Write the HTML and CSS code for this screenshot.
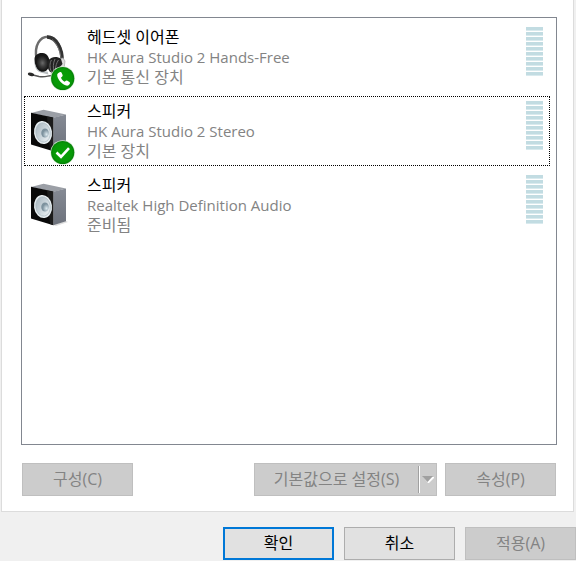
FILE: index.html
```html
<!DOCTYPE html>
<html lang="ko">
<head>
<meta charset="utf-8">
<title>소리</title>
<link rel="stylesheet" href="styles.css">
</head>
<body>
<svg class="defs" aria-hidden="true">
  <defs>
    <linearGradient id="side" x1="0" y1="0" x2="0" y2="1"><stop offset="0" stop-color="#858a94"/><stop offset="1" stop-color="#6d727c"/></linearGradient>
    <linearGradient id="cone" x1="0" y1="0" x2="1" y2="1"><stop offset="0" stop-color="#a4b2bb"/><stop offset=".5" stop-color="#c9d4da"/><stop offset="1" stop-color="#f2f6f8"/></linearGradient>
    <radialGradient id="cap" cx=".7" cy=".65"><stop offset="0" stop-color="#dce9ef"/><stop offset="1" stop-color="#7d929e"/></radialGradient>
    <radialGradient id="cup"><stop offset="0" stop-color="#6a6a6a"/><stop offset=".5" stop-color="#3c3c3c"/><stop offset="1" stop-color="#181818"/></radialGradient>
    <radialGradient id="green"><stop offset="0" stop-color="#08a008"/><stop offset=".8" stop-color="#079907"/><stop offset="1" stop-color="#067f08"/></radialGradient>
    <g id="speaker">
      <path d="M28 54l13-4 2 1-12 4z" fill="#dedede"/>
      <path d="M6 16l12.500-3.300L41 17.500l-12.700 3.500z" fill="#9b9fa6"/>
      <path d="M28.300 20.700L41 17.500V50.200L28.300 54.200z" fill="url(#side)"/>
      <path d="M6 15.800l22.300 4.800v33.600L6 47.400z" fill="#090909"/>
      <path d="M22 19.500l6 1.300v33.100l-3-.9z" fill="#1c1c1c"/>
      <ellipse cx="18" cy="35.500" rx="9" ry="11.600" transform="rotate(-8 18 35.500)" fill="#e6edf0"/>
      <ellipse cx="18" cy="35.500" rx="7.200" ry="9.700" transform="rotate(-8 18 35.500)" fill="url(#cone)" stroke="#a9b8c0" stroke-width=".7"/>
      <ellipse cx="20" cy="36" rx="3.800" ry="4.500" fill="url(#cap)"/>
    </g>
    <g id="badge"><circle cx="37.700" cy="55.500" r="12.200" fill="#d4ead4"/><circle cx="37.700" cy="55.500" r="11.600" fill="url(#green)"/></g>
  </defs>
</svg>
<main class="panel">
  <ul class="devices">
    <li class="device">
      <svg class="icon" viewBox="0 0 54 68" aria-hidden="true">
        <path d="M11.500 36C9 22 15 13.800 23 13.800c8.500 0 14 10 14 24" fill="none" stroke="#6c6c6c" stroke-width="2.400"/>
        <path d="M22 14c9 0 15.500 12 15 24" fill="none" stroke="#333" stroke-width="3.600"/>
        <path d="M27 16.500c5 4 8.500 11 9 20" fill="none" stroke="#858585" stroke-width=".8"/>
        <path d="M31 37l7-2 2 3-1 8-9 7-4-2z" fill="#dcdcdc" stroke="#a5a5a5" stroke-width=".7"/>
        <path d="M9.500 36c0-4 4-6.500 8-6 5 .5 7.500 5 7 11-.5 5-3.500 8.500-8 8-5-.5-7-7-7-13z" fill="#171717"/>
        <path d="M9.500 37c-.5 5 1 11 6 12.500l8 2-1-3-6 .3c-4-1-6.500-6-7-11.800z" fill="#b9bec1"/>
        <ellipse cx="17.500" cy="40" rx="6" ry="7.500" fill="url(#cup)" transform="rotate(-8 17.500 40)"/>
        <path d="M23 38c3-4.500 9-5 13-2l1.500 5-7.500 9-5-1c-2.500-3-3-7-2-11z" fill="#222"/>
        <path d="M26.500 37c-2 3-2 8 0 12M30 36c-2 4-2 9-1 13M33.500 37c-2 3-3 6-3 10" fill="none" stroke="#727272"/>
        <path d="M6 51.500l8 2c6 1 8-.5 13-1" fill="none" stroke="#555" stroke-width="1.300"/>
        <ellipse cx="6" cy="51.300" rx="3.200" ry="1.700" fill="#272727" transform="rotate(15 6 51.300)"/>
        <use href="#badge"/>
        <path d="M33 50.200l2-1.200c.8-.3 1.300 0 1.600.7l1 2.400c.2.800-.1 1.300-.8 1.800l-.8.500c.6 2 1.900 3.400 3.700 4.300l.8-.7c.6-.6 1.200-.7 1.900-.3l2 1.400c.7.500.8 1.100.3 1.800l-1.500 1.700c-4.300 1.200-11.500-6.300-11-11z" fill="#fff"/>
      </svg>
      <div class="text"><strong class="name">헤드셋 이어폰</strong><span class="model">HK Aura Studio 2 Hands-Free</span><span class="status">기본 통신 장치</span></div>
      <div class="meter"></div>
    </li>
    <li class="device focused">
      <svg class="icon" viewBox="0 0 54 68" aria-hidden="true"><use href="#speaker"/><use href="#badge"/><path d="M31.500 55.500l4.500 4.300 8-8.600" fill="none" stroke="#fff" stroke-width="2.600"/></svg>
      <div class="text"><strong class="name">스피커</strong><span class="model">HK Aura Studio 2 Stereo</span><span class="status">기본 장치</span></div>
      <div class="meter"></div>
    </li>
    <li class="device">
      <svg class="icon" viewBox="0 0 54 68" aria-hidden="true"><use href="#speaker"/></svg>
      <div class="text"><strong class="name">스피커</strong><span class="model">Realtek High Definition Audio</span><span class="status">준비됨</span></div>
      <div class="meter"></div>
    </li>
  </ul>
  <div class="actions">
    <button class="btn" disabled>구성(C)</button>
    <div class="split">
      <button class="btn set-default" disabled>기본값으로 설정(S)</button>
      <button class="btn more" disabled aria-label="기본값 옵션"><svg class="arrow" viewBox="0 0 14 10" aria-hidden="true"><path d="M2 2h11v1L8 8H7z" fill="#fff"/><path d="M1 1h11L6.500 7z" fill="#a0a0a0"/></svg></button>
    </div>
    <button class="btn" disabled>속성(P)</button>
  </div>
</main>
<footer class="footer">
  <button class="btn primary">확인</button>
  <button class="btn">취소</button>
  <button class="btn" disabled>적용(A)</button>
</footer>
</body>
</html>
```
FILE: styles.css
```css
* { box-sizing: border-box; }

body {
  margin: 0;
  background: #f0f0f0;
  color: #000;
  font-family: "Open Sans", "Noto Sans CJK KR", sans-serif;
  font-size: 16px;
  line-height: 20px;
}

.defs { position: absolute; width: 0; height: 0; }

.panel {
  margin: 0 2px 0 1px;
  padding: 17px 16px 15px 19px;
  border: 1px solid #dcdcdc;
  border-top: 0;
  background: #fff;
}

.devices {
  display: flex;
  flex-direction: column;
  gap: 4px;
  min-height: 428px;
  margin: 0;
  padding: 4px 6px 4px 2px;
  border: 1px solid #828790;
  list-style: none;
}

.device {
  display: flex;
  gap: 8px;
  padding-right: 6px;
  border: 1px solid transparent;
}

.focused { border: 1px dotted #000; }

.icon { display: block; flex: none; width: 54px; height: 68px; }

.text {
  display: flex;
  flex: 1;
  flex-direction: column;
  padding-top: 4px;
}

.name { font-weight: 400; }
.model, .status { color: #838383; }
.model { font-size: 15px; }

.meter {
  width: 17px;
  height: 49px;
  margin-top: 4px;
  background: repeating-linear-gradient(#c2dce2 0 3px, #d9eaee 3px 4px, #fff 4px 5px);
}

.actions { display: flex; gap: 8px; margin-top: 18px; padding: 0 1px; }

.btn {
  width: 111px;
  height: 33px;
  padding: 0 0 2px;
  border: 1px solid #adadad;
  border-radius: 0;
  background: #e1e1e1;
  color: #000;
  font: inherit;
}

.btn:disabled { border-color: #bfbfbf; background: #ccc; color: #838383; }
.btn.primary { border: 2px solid #0078d7; }

.split {
  display: flex;
  align-items: center;
  width: 183px;
  margin-left: auto;
  border: 1px solid #bfbfbf;
  background: #ccc;
}

.split .btn { border: 0; height: 27px; }
.split .set-default { flex: 1; }
.split .more {
  width: 18px;
  padding: 0;
  border-left: 1px solid #a0a0a0;
  box-shadow: inset 1px 0 #fff;
}

.arrow { display: block; width: 14px; height: 10px; margin-left: 2px; }

.footer { display: flex; justify-content: flex-end; gap: 10px; margin-top: 15px; }
```
